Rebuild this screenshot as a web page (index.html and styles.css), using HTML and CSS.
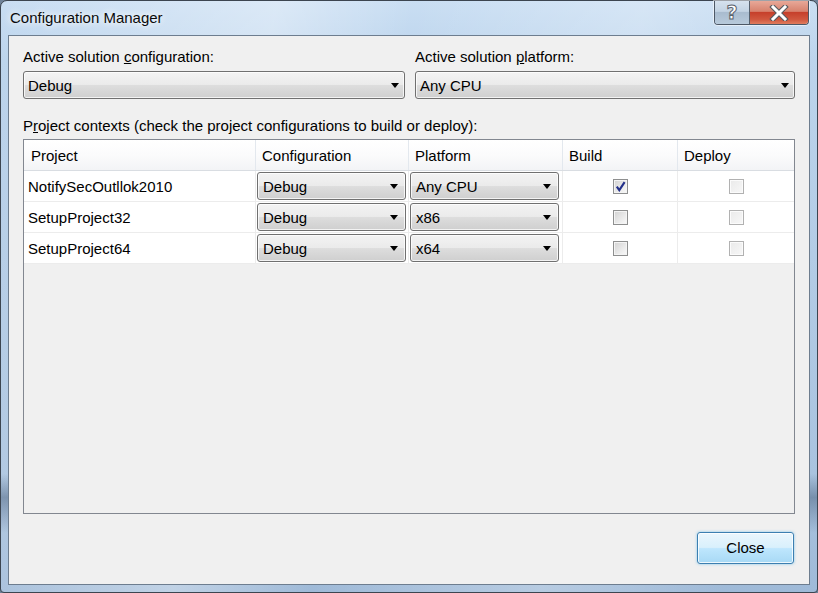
FILE: index.html
```html
<!DOCTYPE html>
<html>
<head>
<meta charset="utf-8">
<title>Configuration Manager</title>
<link rel="stylesheet" href="styles.css">
</head>
<body>
<div class="window">
  <div class="titlebar">
    <div class="title">Configuration Manager</div>
    <div class="caption-buttons">
      <div class="cap-btn help"><span>?</span></div>
      <div class="cap-btn close">
        <svg width="24" height="16" viewBox="0 0 24 16">
          <path d="M6 2 L18 14 M18 2 L6 14" stroke="#555a60" stroke-width="5.2" stroke-linecap="square" fill="none"/>
          <path d="M6 2 L18 14 M18 2 L6 14" stroke="#ffffff" stroke-width="3" stroke-linecap="square" fill="none"/>
        </svg>
      </div>
    </div>
  </div>
  <div class="client">
    <div class="top-row">
      <div class="field">
        <div class="label">Active solution <u>c</u>onfiguration:</div>
        <div class="combo"><span>Debug</span><i class="arrow"></i></div>
      </div>
      <div class="field">
        <div class="label">Active solution <u>p</u>latform:</div>
        <div class="combo"><span>Any CPU</span><i class="arrow"></i></div>
      </div>
    </div>
    <div class="label contexts">P<u>r</u>oject contexts (check the project configurations to build or deploy):</div>
    <div class="grid">
      <div class="row head">
        <div class="cell c1">Project</div>
        <div class="cell c2">Configuration</div>
        <div class="cell c3">Platform</div>
        <div class="cell c4">Build</div>
        <div class="cell c5">Deploy</div>
      </div>
      <div class="row">
        <div class="cell c1 name">NotifySecOutllok2010</div>
        <div class="cell c2"><div class="combo small"><span>Debug</span><i class="arrow"></i></div></div>
        <div class="cell c3"><div class="combo small"><span>Any CPU</span><i class="arrow"></i></div></div>
        <div class="cell c4 center"><div class="check checked">
          <svg width="11" height="11" viewBox="0 0 11 11"><path d="M1.8 5.6 L4.3 9.2 L9.6 1.2" stroke="#23308a" stroke-width="2.1" fill="none" stroke-linejoin="miter"/></svg>
        </div></div>
        <div class="cell c5 center"><div class="check disabled"></div></div>
      </div>
      <div class="row">
        <div class="cell c1 name">SetupProject32</div>
        <div class="cell c2"><div class="combo small"><span>Debug</span><i class="arrow"></i></div></div>
        <div class="cell c3"><div class="combo small"><span>x86</span><i class="arrow"></i></div></div>
        <div class="cell c4 center"><div class="check"></div></div>
        <div class="cell c5 center"><div class="check disabled"></div></div>
      </div>
      <div class="row">
        <div class="cell c1 name">SetupProject64</div>
        <div class="cell c2"><div class="combo small"><span>Debug</span><i class="arrow"></i></div></div>
        <div class="cell c3"><div class="combo small"><span>x64</span><i class="arrow"></i></div></div>
        <div class="cell c4 center"><div class="check"></div></div>
        <div class="cell c5 center"><div class="check disabled"></div></div>
      </div>
      <div class="grid-empty"></div>
    </div>
    <div class="footer">
      <div class="btn">Close</div>
    </div>
  </div>
</div>
</body>
</html>
```

FILE: styles.css
```css
html, body {
  margin: 0;
  padding: 0;
  width: 818px;
  height: 593px;
  overflow: hidden;
  background: #6f8299;
}

.window {
  box-sizing: border-box;
  width: 818px;
  height: 593px;
  display: flex;
  flex-direction: column;
  border: 1px solid #3c4550;
  border-radius: 7px 7px 4px 4px;
  background:
    linear-gradient(180deg, rgba(0,0,0,0) 0%, rgba(0,0,0,0) 80%, rgba(30,50,80,0.35) 84%, rgba(0,0,0,0) 90%, rgba(0,0,0,0) 100%),
    linear-gradient(100deg, rgba(255,255,255,0) 0%, rgba(255,255,255,0.35) 30%, rgba(255,255,255,0) 45%, rgba(255,255,255,0.25) 70%, rgba(255,255,255,0) 90%),
    linear-gradient(180deg, #c9def3 0%, #bcd4ec 10%, #a9c3df 80%, #9fbad8 100%);
  font-family: "Liberation Sans", Arial, sans-serif;
  font-size: 15px;
  color: #000;
}

.titlebar {
  height: 34px;
  display: flex;
  justify-content: space-between;
  align-items: flex-start;
  padding-left: 9px;
  padding-right: 8px;
  flex-shrink: 0;
}

.title {
  margin-top: 7px;
  line-height: 20px;
  font-size: 15px;
  color: #0b0b0b;
  text-shadow: 0 0 6px rgba(255,255,255,0.95), 0 0 10px rgba(255,255,255,0.8);
}

.caption-buttons {
  display: flex;
  height: 23px;
  border: 1px solid #4d5866;
  border-top: none;
  border-radius: 0 0 4px 4px;
  overflow: hidden;
  box-shadow: 0 0 0 1px rgba(255,255,255,0.5);
}

.cap-btn {
  height: 23px;
  display: flex;
  align-items: center;
  justify-content: center;
}

.help {
  width: 34px;
  border-right: 1px solid #55606d;
  background: linear-gradient(180deg, #d6e2ee 0%, #c3d3e3 45%, #a9bccf 50%, #b8cadb 100%);
}

.help span {
  font-family: "DejaVu Sans", sans-serif;
  font-weight: bold;
  font-size: 19px;
  line-height: 19px;
  color: #ffffff;
  -webkit-text-stroke: 1px #5a626c;
}

.close {
  width: 58px;
  background: linear-gradient(180deg, #e8a898 0%, #d7826e 45%, #c6402b 50%, #d0573e 80%, #e07c5e 100%);
}

.client {
  flex: 1;
  margin: 0 7px 7px 7px;
  border: 1px solid #6d7d8f;
  background: #f0f0f0;
  padding: 11px 14px 20px 14px;
  display: flex;
  flex-direction: column;
  min-height: 0;
}

.label {
  line-height: 20px;
  height: 20px;
  white-space: nowrap;
}

.top-row {
  display: grid;
  grid-template-columns: 382px 1fr;
  column-gap: 10px;
}

.field .label {
  margin-bottom: 4px;
}

.combo {
  box-sizing: border-box;
  height: 28px;
  border: 1px solid #707070;
  border-radius: 3px;
  background: linear-gradient(180deg, #f3f3f3 0%, #ebebeb 48%, #dddddd 52%, #cfcfcf 100%);
  box-shadow: inset 0 0 0 1px rgba(255,255,255,0.75);
  display: flex;
  align-items: center;
  justify-content: space-between;
  padding: 1px 5px 0 4px;
  line-height: 20px;
}

.arrow {
  width: 0;
  height: 0;
  border-left: 4px solid transparent;
  border-right: 4px solid transparent;
  border-top: 5px solid #000;
  margin-top: 0;
}

.contexts {
  margin-top: 17px;
  margin-bottom: 3px;
}

.grid {
  flex: 1;
  display: flex;
  flex-direction: column;
  border: 1px solid #828790;
  background: #f0f0f0;
  min-height: 0;
}

.row {
  display: flex;
  background: #ffffff;
  border-bottom: 1px solid #ececec;
}

.row.head {
  background: linear-gradient(180deg, #ffffff 0%, #fbfbfc 50%, #f3f4f6 100%);
  border-bottom: 1px solid #d9dde2;
}

.cell {
  box-sizing: border-box;
  height: 30px;
  border-right: 1px solid #ececec;
  display: flex;
  align-items: center;
  padding: 1px;
  white-space: nowrap;
}

.head .cell {
  height: 30px;
  padding-left: 6px;
  border-right: 1px solid #e3e8ee;
}

.head .cell.c1 { padding-left: 7px; }

.c1 { width: 232px; }
.c2 { width: 153px; }
.c3 { width: 154px; }
.c4 { width: 115px; }
.c5 { width: 116px; border-right: none; }

.head .c5 { border-right: none; }

.name { padding-left: 4px; padding-top: 2px; }

.cell .combo.small {
  flex: 1;
  height: 28px;
  padding-left: 5px;
  padding-right: 7px;
}

.c2 .combo.small { margin-right: 1px; }
.c3 .combo.small { margin-right: 2px; }

.center { justify-content: center; }

.check {
  box-sizing: border-box;
  width: 15px;
  height: 15px;
  border: 1px solid #8e8f8f;
  background: linear-gradient(135deg, #d2d2d2 0%, #ebebeb 60%, #fafafa 100%);
  box-shadow: inset 0 0 0 1px #f4f4f4;
  display: flex;
  align-items: center;
  justify-content: center;
}

.check.disabled {
  border-color: #b1b1b1;
  background: linear-gradient(135deg, #eaeaea 0%, #f2f2f2 60%, #f7f7f7 100%);
  box-shadow: inset 0 0 0 1px #fbfbfb;
}

.grid-empty {
  flex: 1;
  background: #f0f0f0;
}

.footer {
  display: flex;
  justify-content: flex-end;
  margin-top: 18px;
  padding-right: 1px;
}

.btn {
  box-sizing: border-box;
  width: 97px;
  height: 32px;
  border: 1px solid #3c7fb1;
  border-radius: 3px;
  background: linear-gradient(180deg, #eaf6fd 0%, #d9f0fc 48%, #bee6fd 52%, #a7d9f5 100%);
  box-shadow: inset 0 0 0 1px rgba(255,255,255,0.8), 0 0 3px rgba(60,170,230,0.6);
  display: flex;
  align-items: center;
  justify-content: center;
  line-height: 20px;
}
```
